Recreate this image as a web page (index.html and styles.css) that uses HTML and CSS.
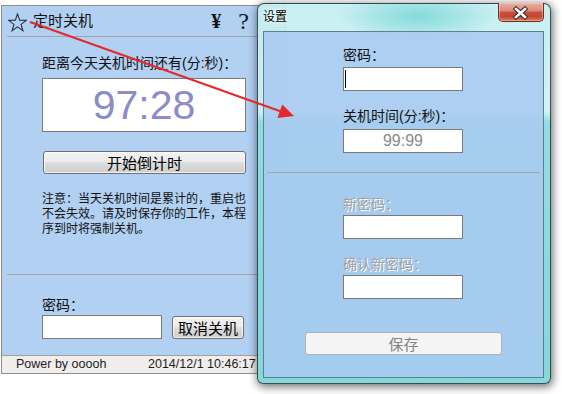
FILE: index.html
```html
<!DOCTYPE html>
<html lang="zh-CN">
<head>
<meta charset="utf-8">
<title>定时关机</title>
<link rel="stylesheet" href="styles.css">
</head>
<body>
<div class="desk">
  <div class="main">
    <div class="hdr">
      <svg class="star" viewBox="0 0 19 19" width="19" height="19"><polygon points="9.5,0.9 11.67,7.21 18.34,7.33 13.02,11.34 14.97,17.72 9.5,13.9 4.03,17.72 5.98,11.34 0.66,7.33 7.33,7.21" fill="none" stroke="#27313c" stroke-width="1.1" stroke-linejoin="miter"/></svg>
      <span class="ttl">定时关机</span>
      <span class="yen">¥</span>
      <span class="help">?</span>
    </div>
    <div class="sep"></div>
    <div class="col">
      <div class="lbl l1">距离今天关机时间还有(分:秒)<span class="cl">：</span></div>
      <div class="count">97:28</div>
      <button class="btn big">开始倒计时</button>
      <div class="note">注意<span class="cl">：</span>当天关机时间是累计的，重启也<br>不会失效。请及时保存你的工作，本程<br>序到时将强制关机。</div>
    </div>
    <div class="sep sep2"></div>
    <div class="col">
      <div class="lbl l2">密码<span class="cl">：</span></div>
      <div class="row"><div class="inp"></div><button class="btn small">取消关机</button></div>
    </div>
    <div class="status"><span class="pw">Power by ooooh</span><span>2014/12/1 10:46:17</span></div>
  </div>

  <div class="set">
    <div class="cap">
      <span class="cap-t">设置</span>
      <div class="close"><svg viewBox="0 0 46 19" width="46" height="19"><path d="M18 7 L27 15 M27 7 L18 15" stroke="#3b2a2a" stroke-width="4.6" stroke-linecap="square" fill="none"/><path d="M18 7 L27 15 M27 7 L18 15" stroke="#ffffff" stroke-width="2.6" stroke-linecap="square" fill="none"/></svg></div>
    </div>
    <div class="client">
      <div class="f">
        <div class="lbl s1">密码<span class="cl">：</span></div>
        <div class="inp field s1i"><span class="caret"></span></div>
        <div class="lbl s2">关机时间(分:秒)<span class="cl">：</span></div>
        <div class="inp field s2i"><span class="val">99:99</span></div>
      </div>
      <div class="sep csep"></div>
      <div class="f">
        <div class="lbl dis s3">新密码<span class="cl">：</span></div>
        <div class="inp field s3i"></div>
        <div class="lbl dis s4">确认新密码<span class="cl">：</span></div>
        <div class="inp field s4i"></div>
      </div>
      <button class="save">保存</button>
    </div>
  </div>

  <svg class="arrow" viewBox="0 0 562 394" width="562" height="394">
    <line x1="30" y1="22" x2="281" y2="111.5" stroke="#e4282b" stroke-width="2"/>
    <polygon points="277.4,118 282.2,104.6 294,116" fill="#e4282b"/>
  </svg>
</div>
</body>
</html>
```
FILE: styles.css
```css
body {
  margin: 0;
  background: #ffffff;
  font-family: "Liberation Sans", "Noto Sans CJK SC", sans-serif;
  color: #111;
}
.desk {
  position: relative;
  width: 562px;
  height: 394px;
  overflow: hidden;
}
.cl {
  font-family: "Noto Sans CJK JP", "Noto Sans CJK SC", sans-serif;
  line-height: 0;
}

/* ---------- main window ---------- */
.main {
  position: absolute;
  left: 1px;
  top: 5px;
  width: 285px;
  height: 369px;
  box-sizing: border-box;
  border: 1px solid #8e8e8e;
  background: #b2d0f2;
  display: flex;
  flex-direction: column;
}
.hdr {
  height: 30px;
  display: flex;
  align-items: center;
  flex-shrink: 0;
}
.star {
  margin-left: 6px;
  margin-top: 2px;
  flex-shrink: 0;
}
.ttl {
  margin-left: 6px;
  font-size: 15px;
  line-height: 18px;
}
.yen {
  margin-left: auto;
  font-family: "Liberation Serif", serif;
  font-weight: bold;
  font-size: 20px;
  line-height: 22px;
}
.help {
  font-family: "Liberation Serif", serif;
  font-size: 24px;
  line-height: 24px;
  margin-left: 17px;
  margin-right: 36px;
}
.sep {
  height: 1px;
  background: #a3a3a3;
  margin: 0 4px 0 5px;
  flex-shrink: 0;
}
.col {
  padding-left: 40px;
  width: 204px;
}
.lbl {
  font-size: 14px;
  line-height: 16px;
  white-space: nowrap;
}
.l1 { margin-top: 18px; }
.count {
  margin-top: 7px;
  height: 52px;
  border: 1px solid #7a7a7a;
  background: #fff;
  color: #8c8cc8;
  font-size: 41px;
  display: flex;
  align-items: center;
  justify-content: center;
}
.btn {
  font-family: inherit;
  font-size: 15px;
  color: #000;
  border: 1px solid #707070;
  border-radius: 3px;
  background: linear-gradient(#f3f3f3, #ebebeb 50%, #dddddd 50%, #cfcfcf);
  padding: 0;
  box-shadow: inset 0 0 0 1px rgba(255,255,255,0.7);
}
.big {
  display: block;
  width: 203px;
  height: 23px;
  margin-top: 19px;
  margin-left: 1px;
}
.note {
  margin-top: 18px;
  font-size: 12px;
  line-height: 15px;
  white-space: nowrap;
}
.sep2 { margin-top: 37px; }
.l2 { margin-top: 22px; }
.row {
  display: flex;
  align-items: center;
  margin-top: 2px;
}
.inp {
  width: 118px;
  height: 22px;
  border: 1px solid #7a7a7a;
  background: #fff;
  flex-shrink: 0;
}
.small {
  width: 72px;
  height: 23px;
  margin-left: 10px;
  flex-shrink: 0;
}
.status {
  margin-top: auto;
  height: 17px;
  border-top: 1px solid #a0a0a0;
  background: #f0edeb;
  font-size: 12.5px;
  line-height: 17px;
  display: flex;
  white-space: nowrap;
  color: #1e1e1e;
  overflow: hidden;
  flex-shrink: 0;
}
.pw {
  padding-left: 14px;
  width: 132px;
  flex-shrink: 0;
}

/* ---------- settings window ---------- */
.set {
  position: absolute;
  left: 257px;
  top: 3px;
  width: 294px;
  height: 381px;
  box-sizing: border-box;
  border: 1px solid rgba(28, 38, 48, 0.8);
  border-radius: 7px 7px 6px 6px;
  padding: 0 6px 5px 5px;
  display: flex;
  flex-direction: column;
  background:
    radial-gradient(ellipse 80px 26px at 160px 12px, rgba(120, 214, 216, 0.85), rgba(120, 214, 216, 0) 100%),
    linear-gradient(to bottom, rgba(196, 238, 240, 0.92) 0, rgba(204, 241, 243, 0.92) 108px, rgba(140, 220, 222, 0.95) 118px, rgba(128, 214, 217, 0.96) 100%);
  box-shadow: 1px 2px 9px 1px rgba(0, 0, 0, 0.55);
}
.cap {
  height: 27px;
  box-sizing: border-box;
  padding-top: 6px;
  position: relative;
  flex-shrink: 0;
}
.cap-t {
  display: block;
  font-size: 12px;
  line-height: 15px;
  color: #000;
  text-shadow: 0 0 5px #fff, 0 0 3px #fff;
}
.close {
  position: absolute;
  top: -1px;
  right: 0;
  width: 46px;
  height: 19px;
  box-sizing: border-box;
  border: 1px solid #6e2c24;
  border-top: none;
  border-radius: 0 0 5px 5px;
  background: linear-gradient(#eab0a2, #d9887a 45%, #c8503a 50%, #c24a33 75%, #dc7a5e);
  box-shadow: inset 0 0 0 1px rgba(255, 220, 210, 0.45);
  overflow: hidden;
}
.close svg {
  display: block;
  margin: -1px 0 0 -1px;
}
.client {
  flex: 1;
  border: 1px solid #5f7f8e;
  background: rgba(168, 202, 240, 0.88);
  display: flex;
  flex-direction: column;
}
.f {
  margin-left: 79px;
  width: 120px;
}
.field {
  display: flex;
  align-items: center;
  justify-content: center;
}
.s1 { margin-top: 15px; }
.s1i { margin-top: 4px; justify-content: flex-start; }
.caret {
  width: 1px;
  height: 18px;
  background: #000;
  margin-left: 1px;
}
.s2 { margin-top: 17px; }
.s2i { margin-top: 5px; }
.val {
  font-size: 16px;
  color: #8a8a8a;
}
.csep {
  margin: 19px 3px 0 3px;
  background: #a6a6a6;
}
.dis {
  color: #a2a2a2;
  text-shadow: 1px 1px 0 #ffffff;
}
.s3 { margin-top: 23px; }
.s3i { margin-top: 3px; }
.s4 { margin-top: 17px; }
.s4i { margin-top: 3px; }
.save {
  margin-top: 33px;
  margin-left: 41px;
  width: 197px;
  height: 23px;
  font-family: inherit;
  font-size: 15px;
  color: #838383;
  background: #f4f4f4;
  border: 1px solid #adb2b5;
  border-radius: 3px;
  padding: 0;
}

/* ---------- annotation arrow ---------- */
.arrow {
  position: absolute;
  left: 0;
  top: 0;
  pointer-events: none;
}
```
